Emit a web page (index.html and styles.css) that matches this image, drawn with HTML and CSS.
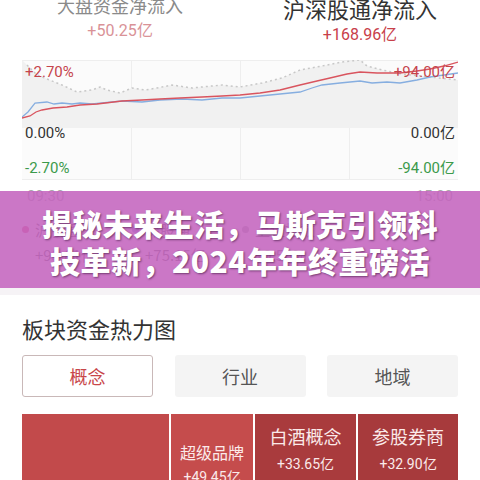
FILE: index.html
```html
<!DOCTYPE html>
<html lang="zh-CN">
<head>
    <meta charset="UTF-8">
    <meta name="viewport" content="width=device-width, initial-scale=1.0">
    <title>资金流向</title>
    <link rel="stylesheet" href="styles.css">
</head>
<body>

<div class="page">
    <!-- net inflow header -->
    <div class="flow-head">
        <div class="flow-col faded">
            <div class="flow-title">大盘资金净流入</div>
            <div class="flow-value">+50.25亿</div>
        </div>
        <div class="flow-col active">
            <div class="flow-title">沪深股通净流入</div>
            <div class="flow-value">+168.96亿</div>
        </div>
    </div>

    <div class="chart">
        <svg class="chart-svg" width="436" height="120" viewBox="0 0 436 120">
            <line x1="0" y1="0.5" x2="436" y2="0.5" stroke="#eeeeee"/>
            <line x1="0" y1="119.5" x2="436" y2="119.5" stroke="#eeeeee"/>
            <line x1="109.5" y1="0" x2="109.5" y2="120" stroke="#eeeeee"/>
            <line x1="218.5" y1="0" x2="218.5" y2="120" stroke="#eeeeee"/>
            <line x1="327.5" y1="0" x2="327.5" y2="120" stroke="#eeeeee"/>
            <polygon fill="#f1f1f1" points="0,0 5,5 15,15 40,25 55,32 70,30 78,27 85,30 98,33 110,28 123,30 135,28 150,25 170,28 200,25 218,27 240,23 260,18 278,10 300,6 320,2 338,0 345,6 360,10 380,14 408,17 436,20 436,68 0,68"/>
            <polyline fill="none" stroke="#c8c8c8" stroke-width="1.5" stroke-dasharray="2 3" points="5,5 15,15 40,25 55,32 70,30 78,27 85,30 98,33 110,28 123,30 135,28 150,25 170,28 200,25 218,27 240,23 260,18 278,10 300,6 320,2 338,0 345,6 360,10 380,14 408,17 436,20"/>
            <polyline fill="none" stroke="#86aee0" stroke-width="1.3" points="0,57 6,52 13,43 25,42 32,44 40,43 50,44 58,43 70,44 80,43 100,41 120,42 138,40 160,39 180,40 200,38 218,38 238,36 258,34 278,32 290,28 300,25 318,23 338,21 350,23 365,22 378,23 395,20 408,17 422,15 436,13"/>
            <polyline fill="none" stroke="#d9545e" stroke-width="1.3" points="0,58 8,56 14,52 20,50 31,48 45,47 58,45 75,44 100,41 120,40 138,39 158,38 180,37 200,36 218,35 238,33 258,30 278,25 295,21 308,18 325,14 338,12 355,13 378,13 395,11 408,9 422,6 436,2"/>
        </svg>
        <span class="axis-label up left top">+2.70%</span>
        <span class="axis-label up right top">+94.00亿</span>
        <span class="axis-label left mid">0.00%</span>
        <span class="axis-label right mid">0.00亿</span>
        <span class="axis-label down left low">-2.70%</span>
        <span class="axis-label down right low">-94.00亿</span>
    </div>

    <div class="time-row">
        <span>09:30</span>
        <span>15:00</span>
    </div>

    <div class="legend">
        <div class="legend-row">
            <span class="legend-item"><i class="dot sh"></i>沪股通</span>
            <span class="legend-item"><i class="dot sz"></i>深股通</span>
            <span class="legend-item"><i class="dot idx"></i>上证指数</span>
        </div>
        <div class="legend-row">
            <span class="legend-item">+93.81亿</span>
            <span class="legend-item">+75.15亿</span>
            <span class="legend-item">+0.56%</span>
        </div>
    </div>

    <!-- headline banner lying over the chart legend -->
    <div class="banner">
        <p>揭秘未来生活，马斯克引领科</p>
        <p>技革新，2024年年终重磅活</p>
    </div>

    <div class="divider"></div>

    <div class="heat">
        <h2>板块资金热力图</h2>
        <div class="tabs">
            <div class="tab selected">概念</div>
            <div class="tab">行业</div>
            <div class="tab">地域</div>
        </div>
        <div class="heatmap">
            <div class="cell c1"></div>
            <div class="cell c2">
                <div class="cell-name">超级品牌</div>
                <div class="cell-value">+49.45亿</div>
            </div>
            <div class="cell c3">
                <div class="cell-name">白酒概念</div>
                <div class="cell-value">+33.65亿</div>
            </div>
            <div class="cell c4">
                <div class="cell-name">参股券商</div>
                <div class="cell-value">+32.90亿</div>
            </div>
        </div>
    </div>
</div>

</body>
</html>
```

FILE: styles.css
```css
body {
    margin: 0;
    background-color: #ffffff;
    font-family: "Noto Sans CJK SC", "Noto Sans", sans-serif;
    color: #333333;
    overflow: hidden;
}
.page {
    position: relative;
    width: 480px;
    height: 480px;
    overflow: hidden;
}
.flow-head {
    display: flex;
    height: 60px;
}
.flow-col {
    flex: 1;
    text-align: center;
}
.faded .flow-title {
    font-size: 18px;
    line-height: 22px;
    margin-top: -6px;
    color: #8a8a8a;
}
.faded .flow-value {
    font-family: "Roboto", sans-serif;
    font-size: 16px;
    line-height: 20px;
    margin-top: 5px;
    color: #d99297;
}
.active .flow-title {
    font-size: 22px;
    line-height: 26px;
    margin-top: -5px;
    color: #333333;
}
.active .flow-value {
    font-family: "Roboto", sans-serif;
    font-size: 16px;
    line-height: 20px;
    margin-top: 4px;
    color: #c8404a;
}
.chart {
    position: relative;
    margin: 0 22px;
    height: 120px;
    background-color: #fbfbfb;
}
.chart-svg {
    display: block;
}
.axis-label {
    position: absolute;
    font-family: "Roboto", sans-serif;
    font-size: 15px;
    line-height: 18px;
    color: #333333;
}
.axis-label.left { left: 3px; }
.axis-label.right { right: 3px; }
.axis-label.top { top: 3px; }
.axis-label.mid { top: 64px; }
.axis-label.low { top: 99px; }
.axis-label.up { color: #c5444c; }
.axis-label.down { color: #3b9a4b; }
.time-row {
    display: flex;
    justify-content: space-between;
    margin: 0 27px;
    padding-top: 7px;
    font-family: "Roboto", sans-serif;
    font-size: 15px;
    line-height: 18px;
    color: #a8a8a8;
}
.legend {
    height: 83px;
    box-sizing: border-box;
    padding: 12px 0 0 22px;
    font-size: 15px;
    color: #666666;
}
.legend-row {
    display: flex;
    height: 25px;
}
.legend-item {
    width: 110px;
    display: flex;
    align-items: center;
    padding-left: 13px;
    box-sizing: border-box;
    position: relative;
}
.dot {
    position: absolute;
    left: 0;
    top: 9px;
    width: 7px;
    height: 7px;
    border-radius: 50%;
}
.dot.sh { background-color: #e0507e; }
.dot.sz { background-color: #7c8ee0; }
.dot.idx { background-color: #aaaaaa; }
.banner {
    position: absolute;
    left: 0;
    top: 191px;
    width: 480px;
    height: 97px;
    background-color: rgba(196, 100, 190, 0.88);
    color: #ffffff;
    text-align: center;
    box-sizing: border-box;
    padding-top: 14px;
}
.banner p {
    margin: 0;
    font-size: 30px;
    line-height: 37px;
    font-weight: 900;
    letter-spacing: 0.5px;
    text-shadow: 1px 1px 2px rgba(60, 20, 60, 0.6);
}
.divider {
    height: 7px;
    background-color: #f6f3f6;
}
.heat {
    padding: 19px 22px 0;
}
.heat h2 {
    margin: 0;
    font-size: 22px;
    line-height: 28px;
    font-weight: normal;
    color: #333333;
}
.tabs {
    display: flex;
    justify-content: space-between;
    margin-top: 13px;
}
.tab {
    width: 131px;
    height: 42px;
    box-sizing: border-box;
    border-radius: 3px;
    background-color: #f4f4f4;
    font-size: 18px;
    color: #555555;
    display: flex;
    align-items: center;
    justify-content: center;
}
.tab.selected {
    background-color: #ffffff;
    border: 1px solid #c9b8b8;
    color: #c8464a;
}
.heatmap {
    display: flex;
    gap: 2px;
    margin-top: 17px;
    height: 110px;
}
.cell {
    color: #fbeaea;
    text-align: center;
}
.c1 { width: 147px; background-color: #c24a4b; }
.c2 { width: 82px; background-color: #c54c4c; padding-top: 27px; }
.c3 { width: 101px; background-color: #a93b3d; padding-top: 9px; }
.c4 { width: 100px; background-color: #a73a3c; padding-top: 9px; }
.cell-name {
    font-size: 18px;
    line-height: 26px;
}
.c2 .cell-name {
    font-size: 16px;
    line-height: 22px;
}
.cell-value {
    font-family: "Roboto", sans-serif;
    font-size: 14px;
    line-height: 20px;
    margin-top: 5px;
}
.c2 .cell-value {
    margin-top: 4px;
}
```
